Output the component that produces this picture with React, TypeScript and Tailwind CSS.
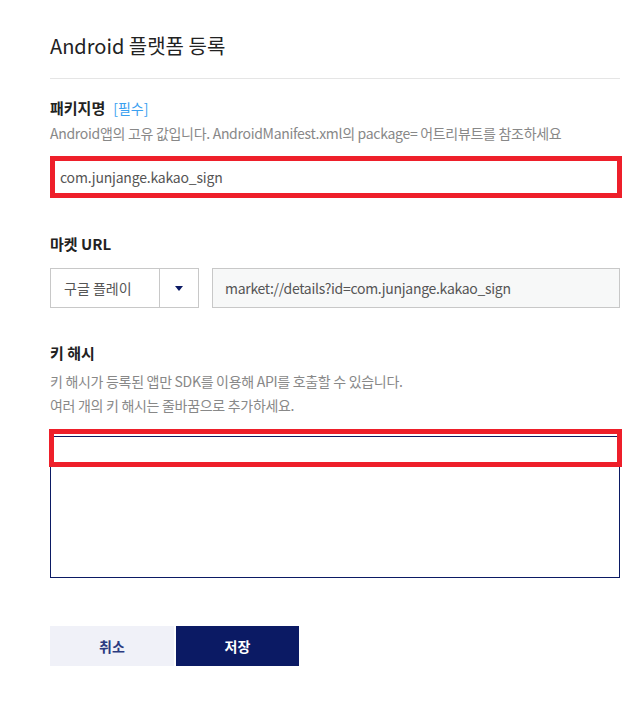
import React from "react";

export default function App() {
  return (
    <div
      className="w-[628px] h-[708px] bg-white pl-[50px] pr-[8px] pt-[31px]"
      style={{ fontFamily: '"Noto Sans CJK KR", "Noto Sans", sans-serif' }}
    >
      <h1 className="text-[20px] leading-[30px] text-[#222] pb-[17px] border-b border-[#e5e5e5]">
        Android 플랫폼 등록
      </h1>

      {/* 패키지명 */}
      <div className="mt-[18px] flex items-center gap-[8px]">
        <span className="text-[15px] leading-[22px] font-bold text-[#222]">패키지명</span>
        <span className="text-[14px] leading-[22px] text-[#3aa0f0]">[필수]</span>
      </div>
      <p className="mt-[4px] text-[14px] leading-[20px] tracking-[-0.3px] text-[#888]">
        Android앱의 고유 값입니다. AndroidManifest.xml의 package= 어트리뷰트를 참조하세요
      </p>
      <div className="mt-[13px] -mr-[2px] h-[42px] border-[5px] border-[#ee1f2a] flex items-center pl-[5px]">
        <span className="text-[14px] tracking-[-0.2px] text-[#555]">com.junjange.kakao_sign</span>
      </div>

      {/* 마켓 URL */}
      <div className="mt-[35px] text-[15px] leading-[22px] font-bold text-[#222]">마켓 URL</div>
      <div className="mt-[13px] flex gap-[13px] h-[40px]">
        <div className="w-[149px] flex border border-[#c8c8c8]">
          <div className="flex-1 flex items-center pl-[13px] text-[14px] text-[#555] border-r border-[#c8c8c8]">
            구글 플레이
          </div>
          <div className="w-[38px] flex items-center justify-center">
            <svg width="8" height="5" viewBox="0 0 8 5">
              <path d="M0 0h8L4 5z" fill="#0b1a64" />
            </svg>
          </div>
        </div>
        <div className="flex-1 flex items-center pl-[12px] bg-[#f7f8f8] border border-[#c8c8c8] text-[14px] tracking-[-0.3px] text-[#555]">
          market://details?id=com.junjange.kakao_sign
        </div>
      </div>

      {/* 키 해시 */}
      <div className="mt-[34px] text-[15px] leading-[22px] font-bold text-[#222]">키 해시</div>
      <p className="mt-[5px] text-[14px] leading-[24px] tracking-[-0.3px] text-[#888]">
        키 해시가 등록된 앱만 SDK를 이용해 API를 호출할 수 있습니다.
        <br />
        여러 개의 키 해시는 줄바꿈으로 추가하세요.
      </p>
      <div className="relative mt-[19px] h-[142px] border border-[#0b1a64]">
        <div className="absolute -top-[8px] -left-[2px] -right-[3px] h-[38px] border-[5px] border-[#ee1f2a]" />
      </div>

      <div className="mt-[48px] flex gap-[2px]">
        <button className="w-[124px] h-[40px] bg-[#f0f1f8] text-[14px] font-bold text-[#2b3a80]">취소</button>
        <button className="w-[123px] h-[40px] bg-[#0b1a64] text-[14px] font-bold text-white">저장</button>
      </div>
    </div>
  );
}
